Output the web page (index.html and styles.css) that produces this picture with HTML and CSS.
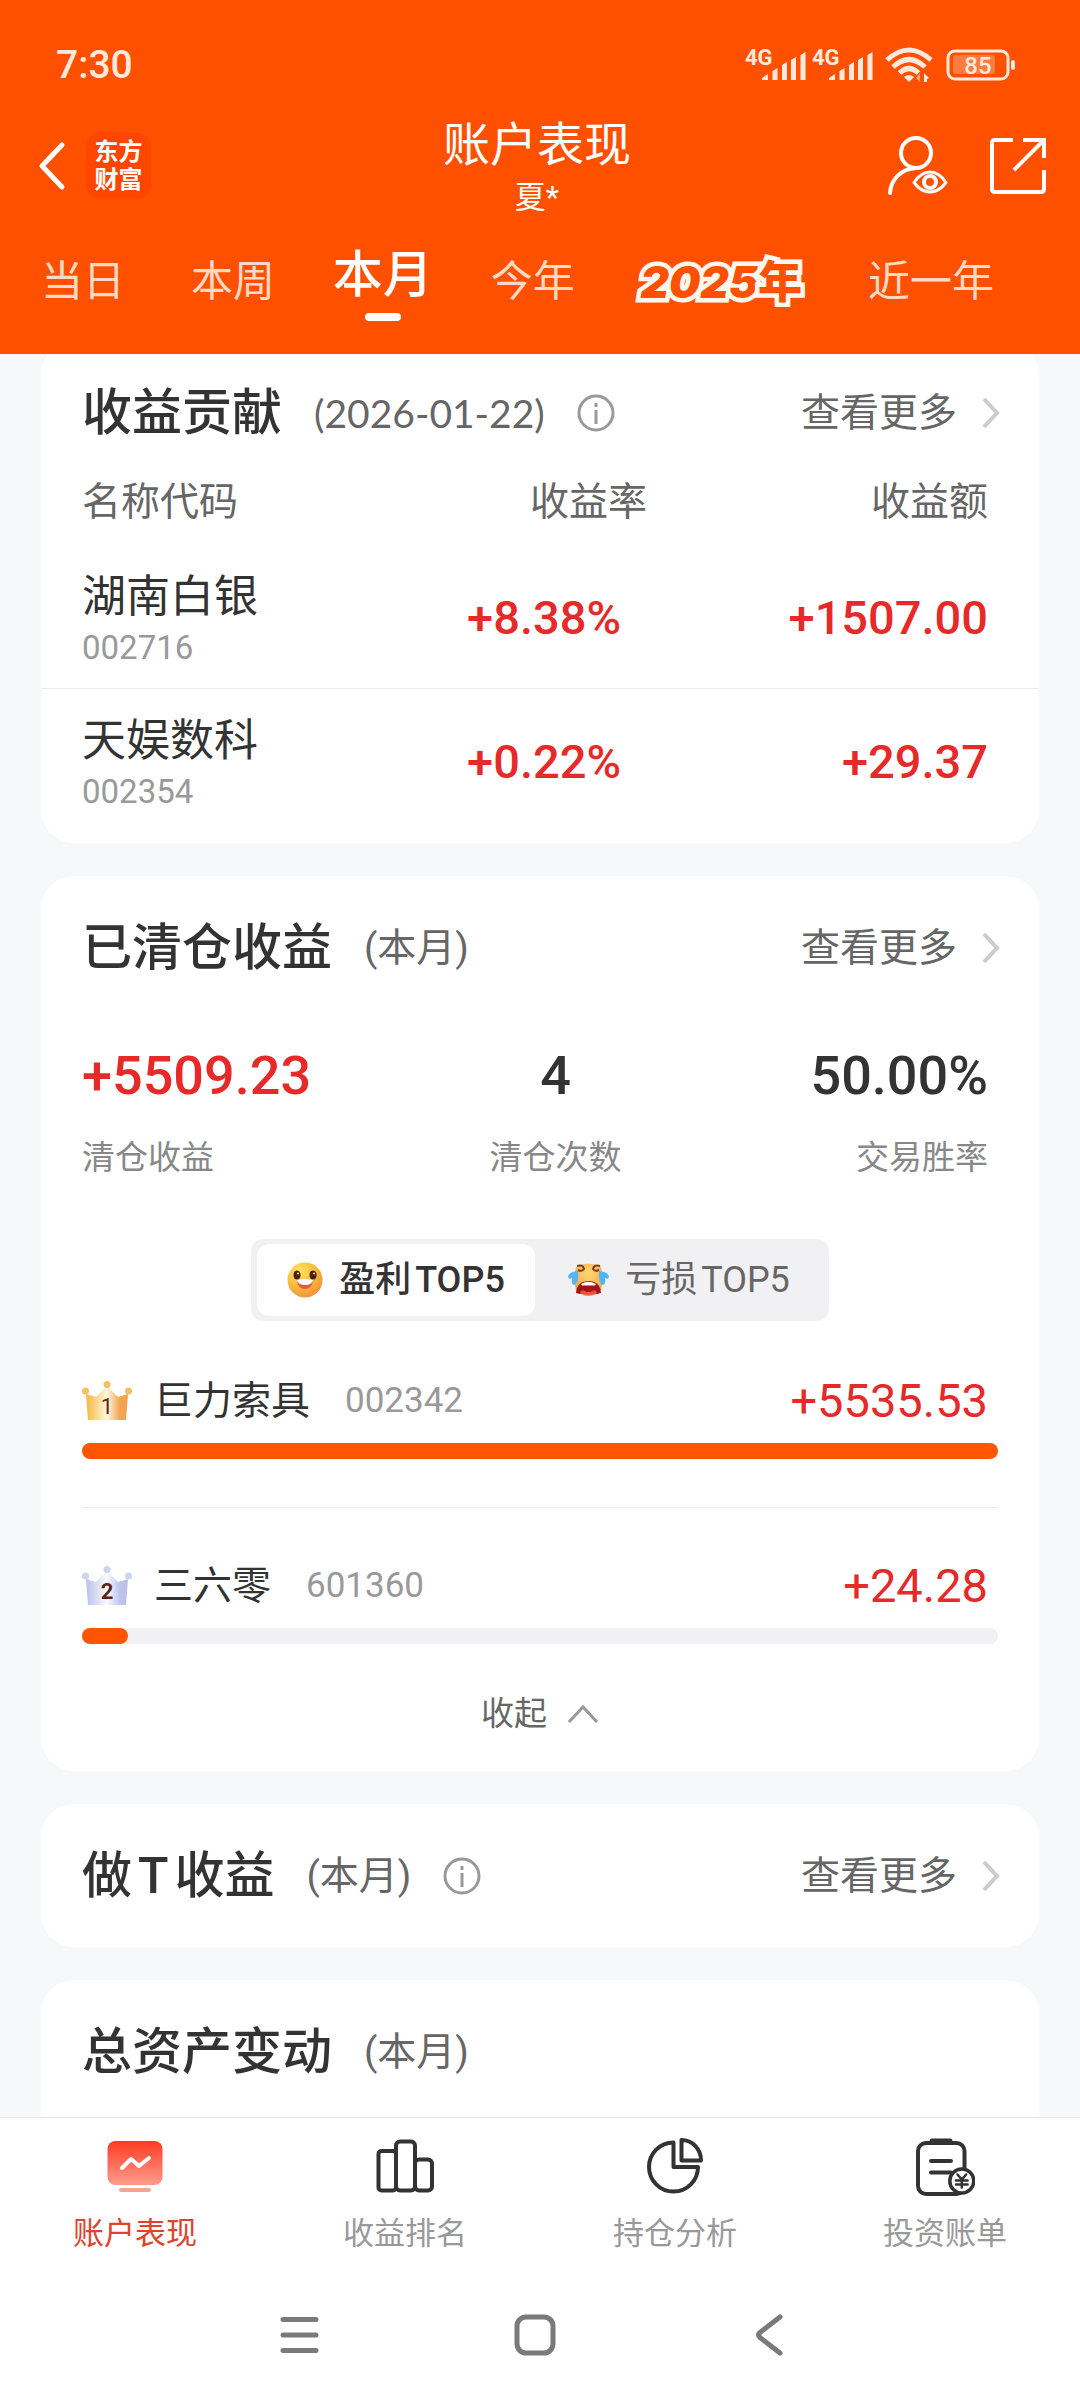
FILE: index.html
```html
<!DOCTYPE html>
<html lang="zh-CN">
<head>
<meta charset="utf-8">
<meta name="viewport" content="width=device-width, initial-scale=1">
<title>账户表现</title>
<link rel="stylesheet" href="styles.css">
</head>
<body>
<header class="header">
  <div class="status">
    <span class="status-time">7:30</span>
    <div class="status-icons">
      <svg class="signal" width="62" height="44" viewBox="0 -4 62 44"><text x="0" y="18" class="signal-text">4G</text><path d="M17 33v-2l6-4v6zM27.500 33v-9l5-3v12zM37 33V18l5-3v18zM46 33V13l5-3v23zM55.500 33V8l5-3v28z"/></svg>
      <svg class="signal" width="62" height="44" viewBox="0 -4 62 44"><text x="0" y="18" class="signal-text">4G</text><path d="M17 33v-2l6-4v6zM27.500 33v-9l5-3v12zM37 33V18l5-3v18zM46 33V13l5-3v23zM55.500 33V8l5-3v28z"/></svg>
      <svg class="wifi" width="48" height="36" viewBox="0 0 48 36"><g fill="none" stroke="#ffe9dc" stroke-width="5"><path d="M2 13Q24 -7 46 13"/><path d="M8 20Q24 5 40 20"/><path d="M14.500 26Q24 17 33.500 26"/></g><path d="M19 30q5-4 10 0l-5 5z" fill="#ffe9dc"/><path d="M35 26v9l-4-4" fill="#ffa57b"/><path d="M39 35v-9l5 5-2 1v3z" fill="#ffe9dc"/></svg>
      <svg class="battery" width="70" height="32" viewBox="0 0 70 32"><rect x="2" y="2" width="60" height="28" rx="7" fill="none" stroke="#ffe9dc" stroke-width="3"/><rect x="7" y="6" width="42" height="19" rx="3" fill="#ff7b40"/><rect x="65" y="11" width="4" height="10" rx="2" fill="#ffe9dc"/><text x="32" y="25" text-anchor="middle" class="battery-text">85</text></svg>
    </div>
  </div>
  <div class="titlebar">
    <div class="titlebar-left">
      <button class="icon-btn" type="button" aria-label="返回"><svg width="28" height="50" viewBox="0 0 28 50" fill="none" stroke="#fff" stroke-width="5" stroke-linecap="round" stroke-linejoin="round"><path d="M24 4L4 25l20 21"/></svg></button>
      <div class="logo"><span>东方</span><span>财富</span></div>
    </div>
    <div class="titlebar-center">
      <h1 class="title">账户表现</h1>
      <div class="subtitle">夏*</div>
    </div>
    <div class="titlebar-right">
      <button class="icon-btn" type="button" aria-label="账户查看"><svg width="64" height="64" viewBox="0 0 64 64" fill="none" stroke="#fff" stroke-width="4" stroke-linecap="round"><circle cx="32" cy="19" r="15"/><path d="M6 59C7 45 17 35 32 34"/><path d="M30 48.500Q37 38 46 38T62 48.500Q55 58 46 58T30 48.500z" stroke-width="3" stroke-linejoin="round"/><circle cx="46" cy="48" r="6" stroke-width="4"/></svg></button>
      <button class="icon-btn" type="button" aria-label="分享"><svg width="56" height="56" viewBox="0 0 56 56" fill="none" stroke="#fff" stroke-width="4"><path d="M23 2H5Q2 2 2 5V51Q2 54 5 54H51Q54 54 54 51V32"/><path d="M33 2H54V20M54 2L24 32"/></svg></button>
    </div>
  </div>
  <nav class="tabs">
    <button class="tab" type="button">当日</button>
    <button class="tab" type="button">本周</button>
    <button class="tab tab-active" type="button">本月</button>
    <button class="tab" type="button">今年</button>
    <button class="tab tab-year" type="button"><i>2025</i>年</button>
    <button class="tab" type="button">近一年</button>
  </nav>
</header>

<main class="content">
  <section class="card">
    <div class="card-head">
      <h2 class="card-title">收益贡献</h2>
      <span class="card-note card-date">(2026-01-22)</span>
      <svg class="info" viewBox="0 0 38 38" fill="none" stroke="#999" stroke-width="3"><circle cx="19" cy="19" r="17"/><path d="M19 16v14M19 9v4"/></svg>
      <a class="more" href="#">查看更多<svg width="18" height="32" viewBox="0 0 18 32" fill="none" stroke="#ccc" stroke-width="4"><path d="M2 2l13 14L2 30"/></svg></a>
    </div>
    <table class="stocks">
      <thead><tr><th>名称代码</th><th>收益率</th><th>收益额</th></tr></thead>
      <tbody>
        <tr><td><div class="stock-name">湖南白银</div><div class="stock-code">002716</div></td><td>+8.38%</td><td>+1507.00</td></tr>
        <tr><td><div class="stock-name">天娱数科</div><div class="stock-code">002354</div></td><td>+0.22%</td><td>+29.37</td></tr>
      </tbody>
    </table>
  </section>

  <section class="card">
    <div class="card-head">
      <h2 class="card-title">已清仓收益</h2>
      <span class="card-note">(本月)</span>
      <a class="more" href="#">查看更多<svg width="18" height="32" viewBox="0 0 18 32" fill="none" stroke="#ccc" stroke-width="4"><path d="M2 2l13 14L2 30"/></svg></a>
    </div>
    <div class="stats">
      <div class="stat"><div class="stat-value up">+5509.23</div><div class="stat-label">清仓收益</div></div>
      <div class="stat stat-mid"><div class="stat-value">4</div><div class="stat-label">清仓次数</div></div>
      <div class="stat stat-end"><div class="stat-value">50.00%</div><div class="stat-label">交易胜率</div></div>
    </div>
    <div class="switch">
      <button class="switch-item switch-on" type="button">
        <svg width="36" height="36" viewBox="0 0 36 36"><defs><radialGradient id="smile" cx=".35" cy=".25" r=".85"><stop offset="0" stop-color="#ffe45e"/><stop offset=".55" stop-color="#fbb83c"/><stop offset="1" stop-color="#f0883c"/></radialGradient></defs><circle cx="18" cy="18" r="17.500" fill="url(#smile)"/><ellipse cx="10" cy="13" rx="3.500" ry="4.500" fill="#4a220c"/><ellipse cx="26" cy="13" rx="3.500" ry="4.500" fill="#4a220c"/><circle cx="11" cy="11.500" r="1" fill="#fff"/><circle cx="27" cy="11.500" r="1" fill="#fff"/><path d="M10 18.500Q18 16 26 18.500Q25 27 18 27T10 18.500z" fill="#e65b3a"/><path d="M10 18Q18 16 26 18Q25 23 18 23T10 18z" fill="#fff"/></svg>
        <span>盈利<span class="top">TOP5</span></span>
      </button>
      <button class="switch-item" type="button">
        <svg width="41" height="34" viewBox="0 0 41 34"><defs><radialGradient id="cry" cx=".5" cy=".3" r=".75"><stop offset="0" stop-color="#ffd873"/><stop offset=".7" stop-color="#f9b050"/><stop offset="1" stop-color="#ee8c48"/></radialGradient></defs><path d="M8 4Q20 -3 33 4Q36 14 33 27Q28 33 20.500 33T8 27Q5 14 8 4z" fill="url(#cry)"/><path d="M9 3q6-2 7 3q-2 3-6 1M32 3q-6-2-7 3q2 3 6 1" fill="none" stroke="#7a3f1c" stroke-width="2"/><path d="M10 8Q0 9 0 14Q1 17 4 15Q3 21 6 22Q11 21 10 8zM31 8q10 1 10 6q-1 3-4 1q1 6-2 7q-5-1-4-14z" fill="#55b4f2"/><path d="M8 30Q9 18 20.500 18T33 30L29 31Q20 27 12 31z" fill="#a31414"/><path d="M13 21Q20 16.500 28 21L27 22.500H14z" fill="#fff"/><path d="M12 30Q13 26 17 28L20.500 30L24 28Q28 26 29 30Q20 34 12 30z" fill="#ea4c43"/></svg>
        <span>亏损<span class="top">TOP5</span></span>
      </button>
    </div>
    <ol class="ranks">
      <li class="rank">
        <div class="rank-line">
          <svg class="crown" viewBox="0 0 50 40"><defs><linearGradient id="gold"><stop offset="0" stop-color="#f6b73c"/><stop offset=".5" stop-color="#fff6e0"/><stop offset=".8" stop-color="#f3a552"/><stop offset="1" stop-color="#f2a24c"/></linearGradient></defs><path d="M4 13l10 3L25 5l11 11 10-3-2 26H6z" fill="url(#gold)"/><g fill="#f3c163"><circle cx="3.500" cy="10" r="3.500"/><circle cx="25" cy="3.500" r="3.500"/><circle cx="46.500" cy="10" r="3.500"/></g><text x="25" y="33" text-anchor="middle" class="crown-text">1</text></svg>
          <span class="rank-name">巨力索具</span><span class="rank-code">002342</span><span class="rank-value">+5535.53</span>
        </div>
        <div class="bar"><div class="bar-fill" style="width:100%"></div></div>
      </li>
      <li class="rank">
        <div class="rank-line">
          <svg class="crown" viewBox="0 0 50 40"><defs><linearGradient id="silver"><stop offset="0" stop-color="#b9c1ea"/><stop offset=".5" stop-color="#fafaff"/><stop offset=".8" stop-color="#c0c5ec"/><stop offset="1" stop-color="#b9c1ea"/></linearGradient></defs><path d="M4 13l10 3L25 5l11 11 10-3-2 26H6z" fill="url(#silver)"/><g fill="#cdd3f0"><circle cx="3.500" cy="10" r="3.500"/><circle cx="25" cy="3.500" r="3.500"/><circle cx="46.500" cy="10" r="3.500"/></g><text x="25" y="33" text-anchor="middle" class="crown-text crown-bold">2</text></svg>
          <span class="rank-name">三六零</span><span class="rank-code">601360</span><span class="rank-value">+24.28</span>
        </div>
        <div class="bar"><div class="bar-fill" style="width:5%"></div></div>
      </li>
    </ol>
    <button class="collapse" type="button">收起<svg width="32" height="20" viewBox="0 0 32 20" fill="none" stroke="#999" stroke-width="3"><path d="M2 18L16 3l14 15"/></svg></button>
  </section>

  <section class="card">
    <div class="card-head">
      <h2 class="card-title">做<span class="letter">T</span>收益</h2>
      <span class="card-note">(本月)</span>
      <svg class="info" viewBox="0 0 38 38" fill="none" stroke="#999" stroke-width="3"><circle cx="19" cy="19" r="17"/><path d="M19 16v14M19 9v4"/></svg>
      <a class="more" href="#">查看更多<svg width="18" height="32" viewBox="0 0 18 32" fill="none" stroke="#ccc" stroke-width="4"><path d="M2 2l13 14L2 30"/></svg></a>
    </div>
  </section>

  <section class="card card-last">
    <div class="card-head">
      <h2 class="card-title">总资产变动</h2>
      <span class="card-note">(本月)</span>
    </div>
  </section>
</main>

<footer class="footer">
  <nav class="nav">
    <a class="nav-item nav-active" href="#"><svg viewBox="0 0 60 60"><defs><linearGradient id="screen" x2="0" y2="1"><stop offset="0" stop-color="#ff3b22"/><stop offset="1" stop-color="#ff9c8e"/></linearGradient></defs><rect x="2.500" y="4" width="55" height="44" rx="8" fill="url(#screen)"/><path d="M17 31l9-9 8 7 10-8" fill="none" stroke="#fff" stroke-width="4" stroke-linecap="round" stroke-linejoin="round"/><rect x="14" y="51" width="32" height="4" rx="2" fill="#f7a497"/></svg><span>账户表现</span></a>
    <a class="nav-item" href="#"><svg viewBox="0 0 60 60" fill="none" stroke="#333" stroke-width="4"><rect x="3.500" y="14" width="17.500" height="39.500" rx="3"/><rect x="21" y="4.500" width="19" height="49" rx="4"/><rect x="40" y="22.500" width="17" height="31" rx="4"/></svg><span>收益排名</span></a>
    <a class="nav-item" href="#"><svg viewBox="0 0 60 60" fill="none" stroke="#333" stroke-width="4" stroke-linejoin="round"><path d="M28.500 5.500V30H53A24.500 24.500 0 1 1 28.500 5.500z"/><path d="M36.500 3A19.500 20 0 0 1 56 23.500H36.500z"/></svg><span>持仓分析</span></a>
    <a class="nav-item" href="#"><svg viewBox="0 0 60 60" fill="none" stroke="#333" stroke-width="4" stroke-linecap="round"><rect x="3" y="6" width="46.500" height="51" rx="8"/><path d="M17 4h18" stroke-width="5"/><path d="M16 24h20M16 35.500h20"/><circle cx="46.800" cy="44" r="12" fill="#fff" stroke-width="3.500"/><path d="M42.500 37.500l4.300 5 4.300-5M46.800 42.500v8M41 43.500h11.600M41 47.500h11.600" stroke-width="2.500"/></svg><span>投资账单</span></a>
  </nav>
  <div class="sysnav">
    <button class="sys-btn" type="button" aria-label="菜单"><svg viewBox="0 0 44 44"><path d="M5 6.500h33M5 22h33M5 37.500h33"/></svg></button>
    <button class="sys-btn" type="button" aria-label="主页"><svg viewBox="0 0 44 44"><rect x="4" y="4" width="36" height="36" rx="9"/></svg></button>
    <button class="sys-btn" type="button" aria-label="返回"><svg viewBox="0 0 44 44"><path d="M32 4L12 19.500Q9 22 12 24.500L32 40"/></svg></button>
  </div>
</footer>
</body>
</html>
```
FILE: styles.css
```css
* {
  box-sizing: border-box;
}

body {
  margin: 0;
  height: 100vh;
  display: flex;
  flex-direction: column;
  background: #f7f8fa;
  color: #333;
  font-family: Roboto, "Noto Sans CJK SC", sans-serif;
}

h1, h2, ol {
  margin: 0;
  padding: 0;
  font-weight: 400;
  list-style: none;
}

button {
  padding: 0;
  border: 0;
  background: none;
  color: inherit;
  font: inherit;
}

a {
  color: inherit;
  text-decoration: none;
}

svg {
  display: block;
  flex: none;
}

/* Header */

.header {
  flex: none;
  background: #ff5000;
  color: #fff;
}

.status {
  display: flex;
  align-items: center;
  justify-content: space-between;
  height: 111px;
  padding: 18px 64px 0 56px;
}

.status-time {
  color: #ffe9dc;
  font-size: 39px;
  font-weight: 500;
}

.status-icons {
  display: flex;
  align-items: center;
}

.signal {
  margin-right: 5px;
  fill: #ffe9dc;
}

.signal-text {
  font-size: 22px;
  font-weight: 700;
}

.wifi {
  margin: 0 13px 0 6px;
}

.battery-text {
  fill: #ffe9dc;
  font-size: 24px;
  font-weight: 500;
}

.titlebar {
  display: grid;
  grid-template-columns: 1fr auto 1fr;
  align-items: center;
  padding: 0 34px 0 28px;
}

.titlebar-left,
.titlebar-right {
  display: flex;
  align-items: center;
}

.titlebar-left {
  gap: 20px;
  padding-left: 10px;
}

.titlebar-right {
  gap: 42px;
  justify-content: flex-end;
}

.logo {
  display: flex;
  flex-direction: column;
  width: 65px;
  padding: 5px 0;
  border-radius: 14px;
  background: #ff4600;
  font-size: 24px;
  font-weight: 700;
  line-height: 28px;
  text-align: center;
}

.titlebar-center {
  padding-top: 4px;
  text-align: center;
}

.title {
  font-size: 47px;
  line-height: 60px;
}

.subtitle {
  font-size: 31px;
  line-height: 46px;
}

.tabs {
  display: flex;
  align-items: flex-start;
  justify-content: space-between;
  height: 133px;
  padding: 24px 86px 0 41px;
}

.tab {
  padding-top: 7px;
  color: #ffd9c5;
  font-size: 42px;
  line-height: 60px;
}

.tab-active {
  position: relative;
  margin: 0 -8px;
  padding-top: 0;
  color: #fff;
  font-size: 50px;
  font-weight: 500;
}

.tab-active::after {
  content: "";
  position: absolute;
  top: 68px;
  left: 50%;
  width: 36px;
  height: 8px;
  margin-left: -18px;
  border-radius: 4px;
  background: #fff;
}

.tab-year {
  color: #ff5000;
  font-family: Inter, "Noto Sans CJK SC", sans-serif;
  font-size: 44px;
  font-weight: 900;
  -webkit-text-stroke: 9px #fff6ee;
  paint-order: stroke fill;
}

/* Cards */

.content {
  flex: 1;
  min-height: 0;
  overflow-y: auto;
  scrollbar-width: none;
  padding: 0 41px;
}

.card {
  margin-bottom: 33px;
  overflow: hidden;
  border-radius: 33px;
  background: #fff;
}

.card:first-child {
  margin-top: -13px;
}

.card-last {
  padding-bottom: 60px;
}

.card-head {
  display: flex;
  align-items: center;
  gap: 32px;
  height: 143px;
  padding: 0 39px 0 41px;
  line-height: 60px;
}

.card-title {
  font-size: 50px;
  font-weight: 500;
}

.letter {
  margin: 0 6px;
}

.card-note {
  color: #666;
  font-size: 39px;
}

.card-date {
  font-family: Lato, sans-serif;
}

.info {
  width: 38px;
  height: 38px;
}

.more {
  display: flex;
  align-items: center;
  gap: 25px;
  margin-left: auto;
  color: #666;
  font-size: 39px;
}

.stocks {
  width: 100%;
  margin-bottom: 10px;
  border-collapse: collapse;
  table-layout: fixed;
}

.stocks th {
  padding: 0 0 25px;
  color: #666;
  font-size: 39px;
  font-weight: 400;
  line-height: 36px;
  text-align: right;
}

.stocks th:first-child,
.stocks td:first-child {
  padding-left: 41px;
  text-align: left;
}

.stocks th:nth-child(2) {
  width: 280px;
}

.stocks th:last-child,
.stocks td:last-child {
  width: 392px;
  padding-right: 51px;
}

.stocks td {
  padding: 20px 0 19px;
  border-bottom: 1px solid #ebebeb;
  color: #e62a2a;
  font-size: 47px;
  font-weight: 500;
  text-align: right;
}

.stocks td:nth-child(2) {
  padding-right: 26px;
}

.stocks tr:last-child td {
  border-bottom-color: transparent;
}

.stock-name {
  padding-top: 2px;
  color: #333;
  font-size: 44px;
  font-weight: 400;
  line-height: 60px;
}

.stock-code {
  color: #999;
  font-size: 33px;
  font-weight: 400;
  line-height: 42px;
}

.stats {
  display: flex;
  justify-content: space-between;
  padding: 27px 51px 0 41px;
}

.stat {
  display: flex;
  flex-direction: column;
  gap: 30px;
}

.stat-mid {
  text-align: center;
}

.stat-end {
  min-width: 188px;
  text-align: right;
}

.stat-value {
  font-size: 54px;
  font-weight: 500;
  line-height: 60px;
}

.stat-label {
  color: #888;
  font-size: 33px;
  line-height: 44px;
}

.up {
  color: #e62a2a;
}

.switch {
  display: flex;
  width: 578px;
  margin: 59px auto 0;
  padding: 5px 6px;
  border-radius: 12px;
  background: #f1f1f4;
}

.switch-item {
  display: flex;
  flex: 1;
  align-items: center;
  justify-content: center;
  gap: 16px;
  height: 72px;
  border-radius: 12px;
  color: #666;
  font-size: 36px;
  line-height: 72px;
}

.switch-on {
  flex: none;
  width: 278px;
  background: #fff;
  color: #333;
  font-weight: 500;
}

.top {
  margin-left: 4px;
}

.ranks {
  padding: 2px 41px 0;
}

.rank {
  padding: 48px 0;
}

.rank:last-child {
  border-top: 1px solid #ebebeb;
}

.rank-line {
  display: flex;
  align-items: center;
  margin-bottom: 12px;
  padding-right: 10px;
  line-height: 60px;
}

.crown {
  width: 50px;
  height: 40px;
}

.crown-text {
  fill: #5a2516;
  font-size: 22px;
}

.crown-bold {
  font-weight: 700;
}

.rank-name {
  margin: 0 35px 0 22px;
  font-size: 39px;
}

.rank-code {
  color: #999;
  font-size: 35px;
}

.rank-value {
  margin-left: auto;
  color: #e62a2a;
  font-size: 47px;
}

.bar {
  height: 16px;
  border-radius: 8px;
  background: #f1f1f4;
}

.bar-fill {
  height: 100%;
  border-radius: 8px;
  background: #ff5500;
}

.collapse {
  display: flex;
  align-items: center;
  gap: 20px;
  margin: 0 auto;
  padding-bottom: 35px;
  color: #666;
  font-size: 33px;
  line-height: 44px;
}

/* Bottom bars */

.footer {
  flex: none;
  border-top: 1px solid #e8e8e8;
  background: #fff;
}

.nav {
  display: grid;
  grid-template-columns: repeat(4, 1fr);
  padding: 19px 0 14px;
}

.nav-item {
  display: flex;
  flex-direction: column;
  align-items: center;
  gap: 15px;
  color: #999;
  font-size: 31px;
  line-height: 44px;
}

.nav-item svg {
  width: 60px;
  height: 60px;
}

.nav-active {
  color: #e0432d;
}

.sysnav {
  display: flex;
  align-items: center;
  justify-content: center;
  height: 130px;
  padding-right: 10px;
}

.sys-btn {
  display: flex;
  justify-content: center;
  width: 235px;
}

.sys-btn svg {
  width: 44px;
  height: 44px;
  fill: none;
  stroke: #7a7a7a;
  stroke-width: 5px;
  stroke-linecap: round;
}
```
